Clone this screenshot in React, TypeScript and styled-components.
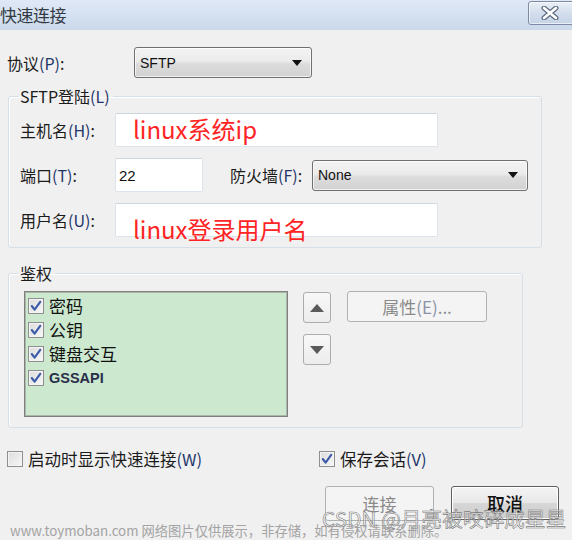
import styled, { createGlobalStyle } from "styled-components";

const GlobalStyle = createGlobalStyle`
  html, body {
    margin: 0;
    padding: 0;
    background: #f0f0f0;
    overflow: hidden;
  }
  * {
    box-sizing: border-box;
  }
`;

const CJK = `"Noto Sans CJK SC", "Noto Sans", sans-serif`;
const LATIN = `"Liberation Sans", Arial, sans-serif`;

type CheckProps = { checked?: boolean };

function CheckBox({ checked }: CheckProps) {
  return (
    <Box>
      {checked && (
        <svg width="12" height="12" viewBox="0 0 12 12">
          <path
            d="M1.8 6 L4.6 9.6 L10.2 1.8"
            fill="none"
            stroke="#3d5aa6"
            strokeWidth="2.1"
            strokeLinecap="round"
            strokeLinejoin="round"
          />
        </svg>
      )}
    </Box>
  );
}

function Arrow({ up }: { up?: boolean }) {
  return (
    <svg width="14" height="8" viewBox="0 0 14 8">
      <path d={up ? "M0 8 L7 0 L14 8 Z" : "M0 0 L7 8 L14 0 Z"} fill="#5a5a5a" />
    </svg>
  );
}

function DropArrow() {
  return (
    <svg width="10" height="6" viewBox="0 0 10 6">
      <path d="M0 0 L10 0 L5 6 Z" fill="#111" />
    </svg>
  );
}

const authMethods = [
  { name: "密码", latin: false },
  { name: "公钥", latin: false },
  { name: "键盘交互", latin: false },
  { name: "GSSAPI", latin: true },
];

export default function App() {
  return (
    <Window>
      <GlobalStyle />
      <TitleBar>
        <TitleText>快速连接</TitleText>
        <CloseButton>
          <svg width="18" height="14" viewBox="0 0 18 14">
            <path d="M3 2 L15 12 M15 2 L3 12" stroke="#5d6b80" strokeWidth="5" strokeLinecap="round" />
            <path d="M3 2 L15 12 M15 2 L3 12" stroke="#ffffff" strokeWidth="2.6" strokeLinecap="round" />
          </svg>
        </CloseButton>
      </TitleBar>

      <ProtocolRow>
        <Label width={127}>
          协议<Key>(P)</Key>:
        </Label>
        <Dropdown width={178} height={31}>
          <span>SFTP</span>
          <DropArrow />
        </Dropdown>
      </ProtocolRow>

      <Group width={534} top={9}>
        <Legend>
          SFTP登陆<Key>(L)</Key>
        </Legend>
        <Rows>
          <FieldRow>
            <Label width={95}>
              主机名<Key>(H)</Key>:
            </Label>
            <TextBox width={323}>
              <Annotation top={1}>linux系统ip</Annotation>
            </TextBox>
          </FieldRow>
          <FieldRow>
            <Label width={95}>
              端口<Key>(T)</Key>:
            </Label>
            <TextBox width={88}>
              <Value>22</Value>
            </TextBox>
            <Label width={82} gap={27}>
              防火墙<Key>(F)</Key>:
            </Label>
            <Dropdown width={216} height={31}>
              <span>None</span>
              <DropArrow />
            </Dropdown>
          </FieldRow>
          <FieldRow>
            <Label width={95}>
              用户名<Key>(U)</Key>:
            </Label>
            <TextBox width={323}>
              <Annotation top={11}>linux登录用户名</Annotation>
            </TextBox>
          </FieldRow>
        </Rows>
      </Group>

      <Group width={515} top={16}>
        <Legend>鉴权</Legend>
        <AuthRow>
          <ListBox>
            {authMethods.map(m => (
              <ListItem key={m.name}>
                <CheckBox checked />
                <ItemText latin={m.latin}>{m.name}</ItemText>
              </ListItem>
            ))}
          </ListBox>
          <MoveButtons>
            <SmallButton>
              <Arrow up />
            </SmallButton>
            <SmallButton>
              <Arrow />
            </SmallButton>
          </MoveButtons>
          <PushButton width={140} height={31} disabled>
            属性<Key>(E)</Key>...
          </PushButton>
        </AuthRow>
      </Group>

      <OptionsRow>
        <Option width={312}>
          <CheckBox />
          <span>
            启动时显示快速连接<Key>(W)</Key>
          </span>
        </Option>
        <Option>
          <CheckBox checked />
          <span>
            保存会话<Key>(V)</Key>
          </span>
        </Option>
      </OptionsRow>

      <ButtonRow>
        <PushButton width={109} height={35} disabled>
          连接
        </PushButton>
        <PushButton width={108} height={34} primary>
          取消
        </PushButton>
      </ButtonRow>

      <CsdnMark>CSDN @月亮被咬碎成星星</CsdnMark>
      <SiteMark>www.toymoban.com 网络图片仅供展示，非存储，如有侵权请联系删除。</SiteMark>
    </Window>
  );
}

const Window = styled.div`
  position: relative;
  width: 572px;
  height: 540px;
  overflow: hidden;
  background: #f0f0f0;
  font-family: ${CJK};
  color: #1b1b1b;
`;

const TitleBar = styled.div`
  height: 30px;
  display: flex;
  justify-content: space-between;
  align-items: flex-start;
  background: linear-gradient(#dfe9f6, #cbd9eb);
`;

const TitleText = styled.div`
  margin-left: 0;
  line-height: 30px;
  font-size: 17px;
  color: #333a44;
  letter-spacing: -0.5px;
`;

const CloseButton = styled.div`
  margin-top: 1px;
  margin-right: -4px;
  width: 48px;
  height: 24px;
  display: flex;
  align-items: center;
  justify-content: center;
  padding-right: 4px;
  border: 1px solid #7d8ca3;
  border-radius: 3px;
  background: linear-gradient(#eaf0f8, #d3deec 50%, #c6d4e7);
  box-shadow: inset 0 0 0 1px rgba(255, 255, 255, 0.6);
`;

const Key = styled.span`
  color: #23366a;
`;

const Label = styled.div<{ width: number; gap?: number }>`
  width: ${p => p.width}px;
  margin-left: ${p => p.gap ?? 0}px;
  flex-shrink: 0;
  font-size: 16px;
  white-space: nowrap;
`;

const ProtocolRow = styled.div`
  margin-top: 17px;
  padding-left: 7px;
  height: 31px;
  display: flex;
  align-items: center;
`;

const Dropdown = styled.div<{ width: number; height: number }>`
  width: ${p => p.width}px;
  height: ${p => p.height}px;
  display: flex;
  align-items: center;
  justify-content: space-between;
  padding: 0 9px 0 5px;
  border: 1px solid #707070;
  border-radius: 3px;
  background: linear-gradient(#f3f3f3, #ebebeb 45%, #dcdcdc 55%, #d2d2d2);
  box-shadow: inset 0 0 0 1px rgba(255, 255, 255, 0.7);
  font-family: ${LATIN};
  font-size: 14px;
  color: #111;
`;

const Group = styled.fieldset<{ width: number; top: number }>`
  width: ${p => p.width}px;
  margin: ${p => p.top}px 0 0 8px;
  padding: 9px 0 10px 11px;
  border: 1px solid #d5dfe5;
  border-radius: 3px;
  box-shadow: inset 1px 1px 0 #ffffff;
  min-inline-size: 0;
`;

const Legend = styled.legend`
  padding: 0 3px 0 1px;
  margin-left: -1px;
  font-size: 16px;
  line-height: 18px;
  color: #1b1b1b;
`;

const Rows = styled.div`
  margin-top: -1px;
  display: flex;
  flex-direction: column;
  gap: 11px;
`;

const FieldRow = styled.div`
  height: 34px;
  display: flex;
  align-items: center;
`;

const TextBox = styled.div<{ width: number }>`
  position: relative;
  width: ${p => p.width}px;
  height: 34px;
  border: 1px solid #dde3ea;
  border-top-color: #cdd5de;
  border-radius: 2px;
  background: #ffffff;
  display: flex;
  align-items: center;
  padding-left: 3px;
`;

const Value = styled.span`
  font-family: ${LATIN};
  font-size: 15px;
  color: #111;
`;

const Annotation = styled.span<{ top: number }>`
  position: absolute;
  left: 17px;
  top: ${p => p.top}px;
  line-height: 28px;
  font-size: 24px;
  color: #ff2424;
  white-space: nowrap;
`;

const AuthRow = styled.div`
  padding-left: 4px;
  display: flex;
  align-items: flex-start;
`;

const ListBox = styled.div`
  width: 264px;
  height: 126px;
  padding: 2px 0 0 3px;
  border: 1px solid #7f7f7f;
  box-shadow: inset 0 0 0 1px #a9b7aa;
  background: #cce8cf;
`;

const ListItem = styled.div`
  height: 24px;
  display: flex;
  align-items: center;
  gap: 5px;
`;

const ItemText = styled.span<{ latin?: boolean }>`
  font-family: ${p => (p.latin ? LATIN : CJK)};
  font-size: ${p => (p.latin ? "14.5px" : "17px")};
  font-weight: ${p => (p.latin ? 700 : 400)};
  color: ${p => (p.latin ? "#2a2f4a" : "#111")};
  line-height: 20px;
`;

const Box = styled.div`
  width: 16px;
  height: 16px;
  flex-shrink: 0;
  display: flex;
  align-items: center;
  justify-content: center;
  border: 1px solid #8e8f8f;
  background: linear-gradient(135deg, #dcdcdc, #f7f7f7);
  box-shadow: inset 0 0 0 1px #f4f4f4;
`;

const MoveButtons = styled.div`
  margin: 1px 0 0 15px;
  display: flex;
  flex-direction: column;
  gap: 11px;
`;

const SmallButton = styled.div`
  width: 28px;
  height: 31px;
  display: flex;
  align-items: center;
  justify-content: center;
  border: 1px solid #adadad;
  border-radius: 3px;
  background: linear-gradient(#f8f8f8, #ececec);
`;

const PushButton = styled.div<{ width: number; height: number; disabled?: boolean; primary?: boolean }>`
  width: ${p => p.width}px;
  height: ${p => p.height}px;
  margin-left: ${p => (p.primary ? 0 : 16)}px;
  display: flex;
  align-items: center;
  justify-content: center;
  border: 1px solid ${p => (p.primary ? "#5e5e5e" : "#adb2b5")};
  border-radius: 3px;
  background: ${p =>
    p.primary ? "linear-gradient(#f4f4f4, #e8e8e8 48%, #d6d6d6 52%, #cdcdcd)" : "#f4f4f4"};
  box-shadow: ${p => (p.primary ? "inset 0 0 0 1px #ffffff" : "none")};
  font-size: ${p => (p.primary ? "18px" : "17px")};
  color: ${p => (p.disabled ? "#8a8a8a" : "#111")};
  font-weight: ${p => (p.primary ? 500 : 400)};

  & ${Key} {
    color: #8c93a8;
  }
`;

const OptionsRow = styled.div`
  margin-top: 19px;
  padding-left: 7px;
  height: 24px;
  display: flex;
  align-items: center;
`;

const Option = styled.div<{ width?: number }>`
  width: ${p => (p.width ? `${p.width}px` : "auto")};
  display: flex;
  align-items: center;
  gap: 5px;
  font-size: 16.5px;
  white-space: nowrap;
`;

const ButtonRow = styled.div`
  margin-top: 15px;
  padding-right: 13px;
  display: flex;
  justify-content: flex-end;
  align-items: flex-start;
  gap: 17px;

  & > div:first-child {
    margin-left: 0;
  }
`;

const CsdnMark = styled.div`
  position: absolute;
  left: 322px;
  top: 504px;
  font-size: 20.5px;
  line-height: 28px;
  color: rgba(255, 255, 255, 0.55);
  -webkit-text-stroke: 0.6px #7a7a7a;
  letter-spacing: 0.2px;
  white-space: nowrap;
`;

const SiteMark = styled.div`
  position: absolute;
  left: 10px;
  top: 521px;
  font-size: 13.3px;
  line-height: 20px;
  color: #a3a3a3;
  white-space: nowrap;
`;
